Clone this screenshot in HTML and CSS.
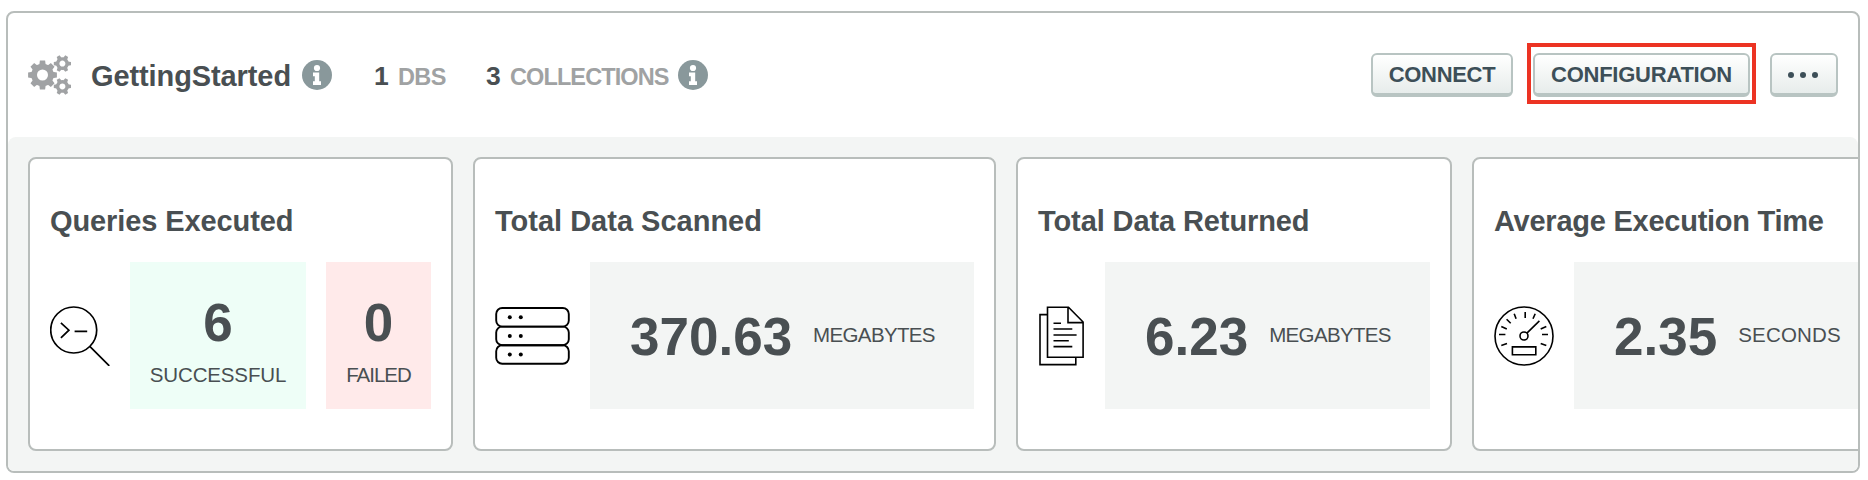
FILE: index.html
```html
<!DOCTYPE html>
<html lang="en">
<head>
<meta charset="utf-8">
<title>GettingStarted</title>
<link rel="stylesheet" href="styles.css">
</head>
<body>
<main class="panel">
  <header class="header">
    <svg class="gears" width="44" height="40" viewBox="0 0 44 40" fill="#a0a2a4">
      <g transform="translate(14.5 20)">
        <circle r="8.4" fill="none" stroke="#a0a2a4" stroke-width="5.8"/>
        <g id="teeth8"><path id="tooth" d="M-3.2-10L-2.6-14.4H2.6L3.2-10z"/>
        <use href="#tooth" transform="rotate(45)"/><use href="#tooth" transform="rotate(90)"/><use href="#tooth" transform="rotate(135)"/><use href="#tooth" transform="rotate(180)"/><use href="#tooth" transform="rotate(225)"/><use href="#tooth" transform="rotate(270)"/><use href="#tooth" transform="rotate(315)"/></g>
      </g>
      <g id="small" transform="translate(34.4 8.6)">
        <circle r="4.7" fill="none" stroke="#a0a2a4" stroke-width="3.4"/>
        <path id="st" d="M5.4-2.2L8.6-1.6V1.6L5.4 2.2z"/>
        <use href="#st" transform="rotate(60)"/><use href="#st" transform="rotate(120)"/><use href="#st" transform="rotate(180)"/><use href="#st" transform="rotate(240)"/><use href="#st" transform="rotate(300)"/>
      </g>
      <use href="#small" y="22.8"/>
    </svg>
    <h1 class="name">GettingStarted</h1>
    <svg class="info" width="30" height="30" viewBox="0 0 30 30"><circle cx="15" cy="15" r="15" fill="#89989b"/><g fill="#fff"><circle cx="15" cy="8" r="3.1"/><path d="M11 12.6H17.2V21.2H19V25H11V21.2H12.8V16.2H11z"/></g></svg>
    <div class="count dbs"><b class="num">1</b><span class="unit">DBS</span></div>
    <div class="count collections"><b class="num">3</b><span class="unit">COLLECTIONS</span></div>
    <svg class="info" width="30" height="30" viewBox="0 0 30 30"><circle cx="15" cy="15" r="15" fill="#89989b"/><g fill="#fff"><circle cx="15" cy="8" r="3.1"/><path d="M11 12.6H17.2V21.2H19V25H11V21.2H12.8V16.2H11z"/></g></svg>
    <div class="actions">
      <button class="btn connect">CONNECT</button>
      <div class="highlight"><button class="btn configuration">CONFIGURATION</button></div>
      <button class="btn more" aria-label="More"><svg width="30" height="6" viewBox="0 0 30 6" fill="#3d4f58"><circle cx="3" cy="3" r="3"/><circle cx="15" cy="3" r="3"/><circle cx="27" cy="3" r="3"/></svg></button>
    </div>
  </header>
  <section class="cards">
    <article class="card queries">
      <h2 class="title">Queries Executed</h2>
      <div class="body">
        <svg width="60" height="60" viewBox="0 0 60 60" fill="none" stroke="#000" stroke-width="1.7"><circle cx="23.7" cy="24" r="23"/><path d="M39.8 40.3L59.3 59.9M10.9 16.8L18.9 24.2L10.9 31.8M24.6 25.4H37.2"/></svg>
        <div class="box stacked ok"><b class="value">6</b><span class="label">SUCCESSFUL</span></div>
        <div class="box stacked failed"><b class="value">0</b><span class="label">FAILED</span></div>
      </div>
    </article>
    <article class="card scanned">
      <h2 class="title">Total Data Scanned</h2>
      <div class="body">
        <svg width="75" height="60" viewBox="0 0 75 60" fill="none" stroke="#000" stroke-width="1.9"><rect x="1.2" y="2" width="72.6" height="18.6" rx="6"/><rect x="1.2" y="20.6" width="72.6" height="18.6" rx="6"/><rect x="1.2" y="39.2" width="72.6" height="18.6" rx="6"/><g fill="#000" stroke="none"><circle cx="14.8" cy="11.3" r="2"/><circle cx="25.8" cy="11.3" r="2"/><circle cx="14.8" cy="29.9" r="2"/><circle cx="25.8" cy="29.9" r="2"/><circle cx="14.8" cy="48.6" r="2"/><circle cx="25.8" cy="48.6" r="2"/></g></svg>
        <div class="box inline"><b class="value">370.63</b><span class="label">MEGABYTES</span></div>
      </div>
    </article>
    <article class="card returned">
      <h2 class="title">Total Data Returned</h2>
      <div class="body">
        <svg width="47" height="60" viewBox="0 0 47 60" fill="none" stroke="#000" stroke-width="1.6"><path d="M9.5 1.2H30.5L45.1 16V51.2H9.5zM30 1.2V16.6H45.1M9.5 8.6H2V58.6H37.8V51.2M15.5 17.2H23M15.5 23H34.3M15.5 29H38.6M15.5 34.7H30.8M15.5 40.6H34.3"/></svg>
        <div class="box inline"><b class="value">6.23</b><span class="label">MEGABYTES</span></div>
      </div>
    </article>
    <article class="card average">
      <h2 class="title">Average Execution Time</h2>
      <div class="body">
        <svg width="60" height="60" viewBox="0 0 60 60" fill="none" stroke="#000" stroke-width="1.6"><circle cx="30" cy="30" r="29"/><circle cx="30" cy="30" r="4"/><path d="M32.9 27.1L45.4 14.9M18.4 40.9H41.8V48.7H18.4zM31.2 6V12M20.2 7.7L22.1 12.8M41.2 7.7L39 12.8M12.6 13.2L16.7 17.3M7.3 20.6L12.8 23M5 28.5H11.4M7.3 39.4L13 37.4M52.3 20.6L46.7 23M54 28.5H48M52.3 39.4L46.7 37.4"/></svg>
        <div class="box inline"><b class="value">2.35</b><span class="label">SECONDS</span></div>
      </div>
    </article>
  </section>
</main>
</body>
</html>
```
FILE: styles.css
```css
* { box-sizing: border-box; }
body {
  margin: 0;
  padding: 11px 8px 7px 6px;
  background: #fff;
  color: #494f52;
  font-family: "Liberation Sans", Arial, sans-serif;
}
svg { display: block; flex: none; }
.panel {
  height: 462px;
  border: 2px solid #b8bdbb;
  border-radius: 8px;
  overflow: hidden;
}
.header {
  display: flex;
  align-items: center;
  height: 124px;
  padding: 0 20px;
}
.name {
  width: 200px;
  margin: 2px 11px 0 19px;
  font-size: 29px;
  line-height: 40px;
  letter-spacing: -0.1px;
  white-space: nowrap;
}
.count {
  display: flex;
  align-items: baseline;
  margin-top: 2px;
  line-height: 40px;
  white-space: nowrap;
}
.dbs { width: 112px; margin-left: 42px; }
.collections { width: 192px; }
.num { width: 24px; font-size: 26.5px; }
.unit { color: #a0a2a3; font-size: 23.5px; font-weight: 700; letter-spacing: -0.9px; }
.dbs .unit { letter-spacing: -0.6px; }
.actions {
  display: flex;
  align-items: center;
  gap: 14px;
  margin-left: auto;
}
.btn {
  display: flex;
  align-items: center;
  justify-content: center;
  height: 44px;
  padding: 1px 0 0;
  border: 2px solid #b8c4c2;
  border-bottom-width: 4px;
  border-radius: 6px;
  background: linear-gradient(#fff, #e7eceb);
  color: #3d4f58;
  font: bold 22px "Liberation Sans", Arial, sans-serif;
  white-space: nowrap;
}
.connect { width: 142px; letter-spacing: -0.3px; }
.configuration { width: 217px; letter-spacing: -0.25px; }
.more { width: 68px; padding-right: 2px; }
.highlight {
  display: flex;
  height: 61px;
  margin-bottom: 3px;
  padding: 6px 2px;
  border: 4px solid #ec3323;
}
.cards {
  display: flex;
  gap: 20px;
  height: 334px;
  padding: 20px;
  border-radius: 8px 8px 0 0;
  background: #f3f5f4;
}
.card {
  flex: none;
  padding: 41px 20px 0;
  border: 2px solid #b8bdbb;
  border-radius: 8px;
  background: #fff;
}
.queries { width: 425px; }
.scanned { width: 523px; }
.returned { width: 436px; }
.average { width: 437px; }
.title {
  margin: 0 0 19px;
  font-size: 29px;
  line-height: 43px;
  letter-spacing: -0.1px;
  white-space: nowrap;
}
.scanned .title { letter-spacing: 0; }
.average .title { letter-spacing: -0.25px; }
.body {
  display: flex;
  align-items: center;
  gap: 20px;
  height: 147px;
}
.box {
  display: flex;
  height: 147px;
  background: #f3f5f4;
  white-space: nowrap;
}
.value { font-size: 53px; line-height: 60px; }
.label { font-size: 20.5px; line-height: 24px; letter-spacing: -0.65px; }
.stacked { flex-direction: column; align-items: center; padding-top: 31px; }
.stacked .label { margin-top: 10px; }
.ok { width: 176px; background: #eefef7; }
.ok .label { letter-spacing: -0.15px; }
.failed { width: 105px; background: #ffeaea; }
.failed .label { letter-spacing: -1px; }
.inline { flex: 1; align-items: center; padding: 2px 0 0 40px; }
.inline .label { margin: 0 0 3px 21px; }
.average .label { letter-spacing: 0.2px; }
```
